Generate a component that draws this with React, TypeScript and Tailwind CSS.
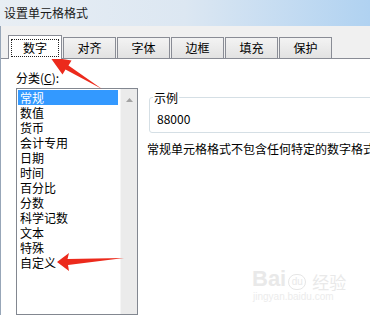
import React from "react";

const items = ["常规", "数值", "货币", "会计专用", "日期", "时间", "百分比", "分数", "科学记数", "文本", "特殊", "自定义"];
const tabs = ["数字", "对齐", "字体", "边框", "填充", "保护"];

export default function App() {
  return (
    <div className="relative w-[370px] h-[315px] overflow-hidden bg-white text-[12px] text-black font-['Noto_Sans_CJK_SC','Microsoft_YaHei',sans-serif]">
      {/* title bar */}
      <div className="h-[26px] flex items-center pl-[4px] bg-gradient-to-r from-[#e8eef4] via-[#dce7f2] to-[#b0d2f1] text-[#1a1a1a] leading-none">
        设置单元格格式
      </div>
      <div className="flex h-[289px]">
        <div className="w-[3px] bg-[#dfe8f1] border-r border-[#97a6b8]" />
        <div className="flex-1 flex flex-col">
          {/* tab strip */}
          <div className="h-[32px] bg-[#f0f0f0] flex items-end pl-[7px] gap-[1px]">
            {tabs.map((t, i) =>
              i === 0 ? (
                <div
                  key={t}
                  className="relative z-10 w-[54px] h-[24px] -mb-px bg-white border border-b-0 border-[#898c95] pt-[3px] pb-[2px] px-[2px] flex"
                >
                  <div className="flex-1 flex items-center justify-center border border-dotted border-[#222] leading-none">
                    {t}
                  </div>
                </div>
              ) : (
                <div
                  key={t}
                  className="w-[53px] h-[21px] border border-b-0 border-[#898c95] bg-gradient-to-b from-[#f3f3f3] to-[#e2e2e2] flex items-center justify-center leading-none"
                >
                  {t}
                </div>
              )
            )}
          </div>
          {/* panel */}
          <div className="flex-1 border-t border-[#898c95] bg-white flex pl-[15px]">
            <div className="w-[122px] flex flex-col">
              <div className="pt-[11px] h-[27px] leading-[16px]">
                分类(<span className="underline">C</span>):
              </div>
              <div className="mt-[2px] flex-1 border border-[#828790] flex">
                <div className="flex-1 px-[1px] pt-[1px] flex flex-col">
                  {items.map((it, i) => (
                    <div
                      key={it}
                      className={
                        "h-[15px] pl-[2px] leading-[15px] whitespace-nowrap " +
                        (i === 0 ? "bg-[#3399ff] text-white" : "")
                      }
                    >
                      {it}
                    </div>
                  ))}
                </div>
                <div className="w-[17px] ml-[1px] bg-[#ebebeb] border-l border-[#f5f5f5] flex justify-center pt-[9px]">
                  <svg width="7" height="4" viewBox="0 0 7 4">
                    <polygon points="3.5,0 7,4 0,4" fill="#a3a3a3" />
                  </svg>
                </div>
              </div>
            </div>
            <div className="ml-[9px] flex flex-col">
              <div className="relative ml-[2px] mt-[38px] w-[300px] h-[36px] border border-[#d5dfe5] rounded-[3px] pl-[7px] pt-[13px] leading-[16px]">
                <span className="absolute -top-[8px] left-[3px] bg-white px-[1px] leading-[16px]">示例</span>
                88000
              </div>
              <div className="mt-[8px] leading-[16px] whitespace-nowrap">常规单元格格式不包含任何特定的数字格式</div>
            </div>
          </div>
        </div>
      </div>

      {/* watermark */}
      <div className="absolute left-[252px] top-[268px] flex items-end gap-[2px] text-[#e9e9e9] pointer-events-none">
        <span className="text-[22px] leading-none font-bold font-['Liberation_Sans',sans-serif]">Bai</span>
        <span className="w-[18px] h-[16px] rounded-full border border-[#e6e6e6] text-[10px] leading-[14px] text-center font-['Liberation_Sans',sans-serif]">du</span>
        <span className="text-[17px] leading-none ml-[4px]">经验</span>
      </div>
      <div className="absolute left-[253px] top-[292px] text-[10px] text-[#ececec] leading-none font-['Liberation_Sans',sans-serif] pointer-events-none">
        jingyan.baidu.com
      </div>

      {/* red arrows */}
      <svg className="absolute inset-0 pointer-events-none" width="370" height="315" viewBox="0 0 370 315">
        <polygon
          points="50,57 71.5,60.5 68.5,65.5 102,89 65.5,69.5 62.5,74.5"
          fill="#ec2a1c"
        />
        <polygon
          points="57,262 69,253 67.5,259 124,258 68,265 69,271"
          fill="#ec2a1c"
        />
      </svg>
    </div>
  );
}
